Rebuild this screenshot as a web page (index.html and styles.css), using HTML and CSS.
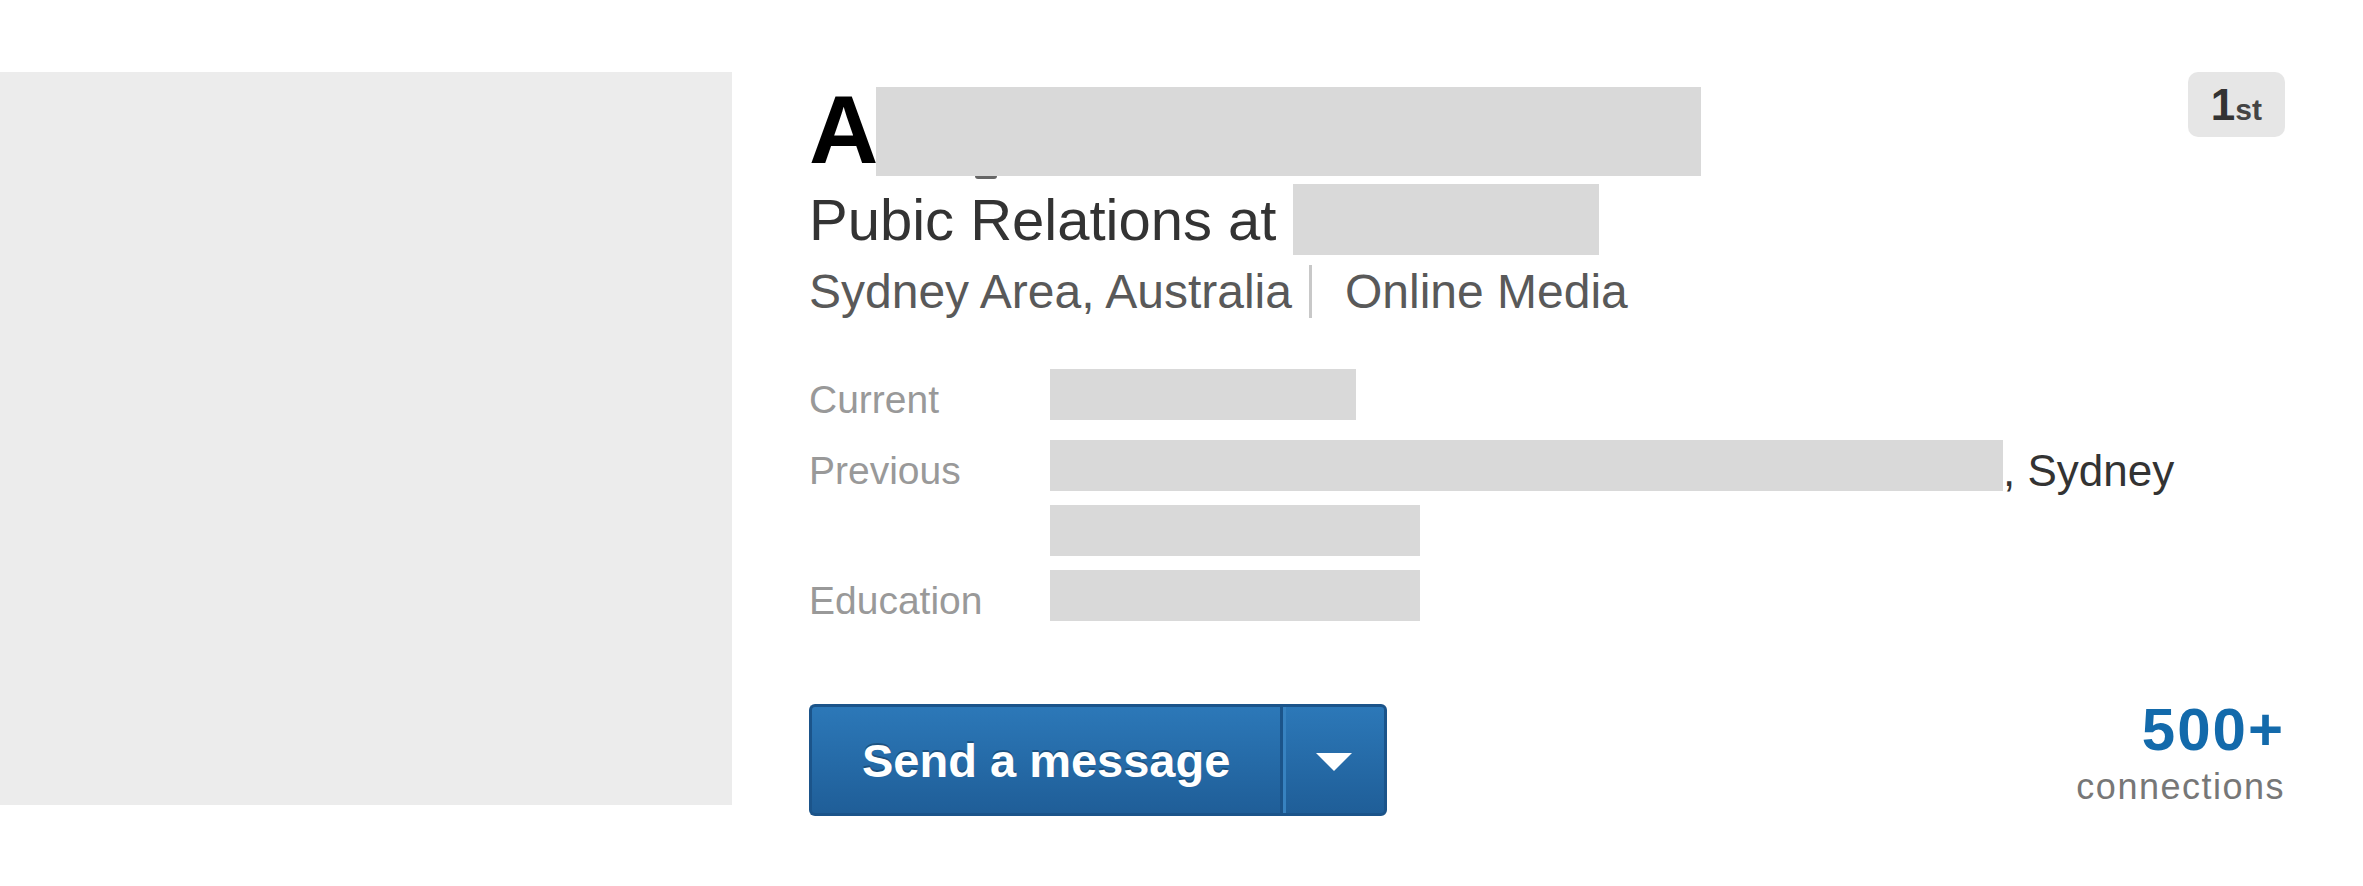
FILE: index.html
```html
<!DOCTYPE html>
<html lang="en">
<head>
  <meta charset="UTF-8" />
  <meta name="viewport" content="width=device-width, initial-scale=1.0"/>
  <title>Profile</title>
  <link rel="stylesheet" href="styles.css">
</head>
<body>
  <div class="profile">
    <div class="photo"></div>

    <div class="info">
      <div class="top">
        <h1 class="name">A<span class="redact mask-name"></span></h1>
        <span class="degree">1<span class="suffix">st</span></span>
      </div>

      <p class="headline">Pubic Relations at <span class="redact mask-headline"></span></p>
      <p class="location">Sydney Area, Australia<span class="industry">Online Media</span></p>

      <dl class="summary">
        <dt class="current">Current</dt>
        <dd class="current"><span class="redact mask-short"></span></dd>
        <dt>Previous</dt>
        <dd><span class="redact mask-long"></span>, Sydney <span class="redact mask-mid"></span></dd>
        <dt>Education</dt>
        <dd><span class="redact mask-mid"></span></dd>
      </dl>

      <div class="actions">
        <div class="btn-group">
          <button class="btn-send">Send a message</button>
          <button class="btn-more"><span class="caret"></span></button>
        </div>
        <div class="connections">
          <strong>500+</strong>
          <span>connections</span>
        </div>
      </div>
    </div>
  </div>
</body>
</html>
```

FILE: styles.css
```css
body {
  font-family: "Liberation Sans", Arial, sans-serif;
  margin: 0;
  padding: 0;
  background: #fff;
  color: #333;
}
.profile {
  display: flex;
  align-items: flex-start;
}
.photo {
  width: 732px;
  height: 733px;
  margin-top: 72px;
  background: #ececec;
  flex-shrink: 0;
}
.info {
  width: 1476px;
  margin-left: 77px;
  margin-top: 72px;
}
.top {
  display: flex;
  justify-content: space-between;
  align-items: flex-start;
}
.redact {
  display: inline-block;
  background: #d9d9d9;
}
.name {
  margin: 8px 0 0;
  font-size: 96px;
  line-height: 100px;
  font-weight: bold;
  color: #000;
}
.mask-name {
  position: relative;
  width: 825px;
  height: 89px;
  margin-left: -2px;
  vertical-align: -13px;
}
/* tail of the hidden "g" sticking out under the mask */
.mask-name::after {
  content: "";
  position: absolute;
  left: 99px;
  bottom: -3px;
  width: 22px;
  height: 3px;
  background: #666;
  border-radius: 0 0 10px 10px;
}
.degree {
  height: 65px;
  padding: 0 23px;
  line-height: 65px;
  font-size: 44px;
  font-weight: bold;
  color: #333;
  background: #e6e6e6;
  border-radius: 10px;
}
.degree .suffix {
  font-size: 30px;
  color: #444;
}
.headline {
  margin: 4px 0 0;
  font-size: 58px;
  line-height: 71px;
  color: #333;
}
.mask-headline {
  width: 306px;
  height: 71px;
  vertical-align: -15px;
}
.location {
  margin: 7px 0 0;
  font-size: 48px;
  line-height: 60px;
  color: #595959;
}
.industry {
  margin-left: 17px;
  padding-left: 33px;
  border-left: 3px solid #c8c8c8;
}
.summary {
  display: grid;
  grid-template-columns: 241px 1fr;
  margin: 45px 0 0;
  font-size: 39px;
  line-height: 65px;
}
.summary dt {
  color: #999;
}
.summary dd {
  margin: 0;
  font-size: 44px;
  color: #333;
}
.summary .current {
  margin-bottom: 6px;
}
.summary .redact {
  height: 51px;
  vertical-align: -5px;
}
.mask-short {
  width: 306px;
}
.mask-long {
  width: 953px;
}
.mask-mid {
  width: 370px;
}
.actions {
  display: flex;
  justify-content: space-between;
  align-items: flex-start;
  margin-top: 71px;
}
.btn-group {
  display: flex;
}
.btn-group button {
  height: 112px;
  margin: 0;
  font-family: "Liberation Sans", Arial, sans-serif;
  color: #fff;
  background: linear-gradient(#2c78b8, #1f5e98);
  border: 3px solid #1b548a;
  cursor: pointer;
}
.btn-send {
  padding: 0 50px;
  font-size: 47px;
  font-weight: bold;
  text-shadow: 0 -2px 0 rgba(0,0,0,0.25);
  border-right: none !important;
  border-radius: 6px 0 0 6px;
}
.btn-more {
  width: 107px;
  padding: 0;
  border-radius: 0 6px 6px 0;
  box-shadow: inset 3px 0 0 #3782c0;
}
.caret {
  display: inline-block;
  margin-top: 6px;
  border-left: 18px solid transparent;
  border-right: 18px solid transparent;
  border-top: 18px solid #fff;
}
.connections {
  text-align: right;
}
.connections strong {
  display: block;
  font-size: 60px;
  line-height: 52px;
  letter-spacing: 2px;
  color: #136aab;
}
.connections span {
  display: block;
  margin-top: 11px;
  font-size: 36px;
  line-height: 40px;
  letter-spacing: 1.5px;
  color: #777;
}
```
